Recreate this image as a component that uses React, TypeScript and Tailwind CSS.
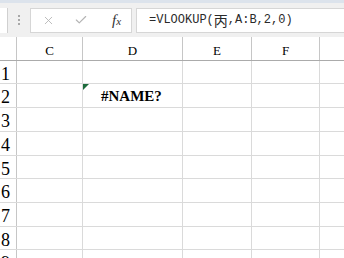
import { X, Check } from 'lucide-react'

const cols = [
  { label: 'C', w: 'w-[66px]' },
  { label: 'D', w: 'w-[100px]' },
  { label: 'E', w: 'w-[69px]' },
  { label: 'F', w: 'w-[68px]' },
]

const rowHeights = ['h-[23px]', 'h-[24px]', 'h-[24px]', 'h-[24px]', 'h-[23px]', 'h-[24px]', 'h-[24px]', 'h-[23px]', 'h-[24px]']

export default function App() {
  return (
    <div className="w-[344px] h-[258px] overflow-hidden bg-white font-['Liberation_Serif',serif] text-black">
      {/* top strip */}
      <div className="h-[3px] bg-[#dce3ec]" />

      {/* formula bar */}
      <div className="h-[34px] bg-[#f0f0f0] flex items-center">
        <div className="w-[8px] h-[25px] bg-white border-r border-[#d0d0d0]" />
        <div className="w-[22px] flex flex-col items-center gap-[2px] pr-[1px]">
          <span className="w-[2px] h-[2px] bg-[#a8a8a8]" />
          <span className="w-[2px] h-[2px] bg-[#a8a8a8]" />
          <span className="w-[2px] h-[2px] bg-[#a8a8a8]" />
        </div>
        <div className="w-[102px] h-[25px] bg-white border border-[#d6d6d6] flex items-center">
          <X className="ml-[11px] w-[13px] h-[13px] text-[#b4b4b4]" strokeWidth={1.6} />
          <Check className="ml-[19px] w-[14px] h-[14px] text-[#b4b4b4]" strokeWidth={2} />
          <span className="ml-[24px] text-[15px] italic text-[#333] leading-none">
            f<span className="text-[11px]">x</span>
          </span>
        </div>
        <div className="ml-[4px] flex-1 h-[25px] bg-white border border-[#d6d6d6] border-r-0 flex items-center pl-[12px] font-['Liberation_Mono','Noto_Sans_CJK_SC',monospace] text-[12px] text-[#2a2a2a]">
          =VLOOKUP(<span className="font-['Noto_Sans_CJK_SC',sans-serif] text-[14px] leading-none">丙</span>,A:B,2,0)
        </div>
      </div>

      {/* column headers */}
      <div className="flex h-[24px] border-b border-[#ababab] bg-white">
        <div className="w-[17px] shrink-0 border-r border-[#c6c6c6]" />
        {cols.map(c => (
          <div key={c.label} className={`${c.w} shrink-0 border-r border-[#c6c6c6] flex items-center justify-center pt-[5px] text-[13px]`}>
            {c.label}
          </div>
        ))}
        <div className="flex-1" />
      </div>

      {/* rows */}
      {rowHeights.map((h, i) => (
        <div key={i} className={`flex ${h} border-b border-[#dadada] shrink-0`}>
          <div className="w-[17px] shrink-0 border-r border-[#c6c6c6] flex items-center pl-[1px] pt-[3px] text-[18px] leading-none">
            {i + 1}
          </div>
          {cols.map(c => (
            <div key={c.label} className={`${c.w} shrink-0 border-r border-[#dadada] relative flex items-center`}>
              {i === 1 && c.label === 'D' && (
                <>
                  <span className="absolute left-0 top-0 w-0 h-0 border-t-[6px] border-t-[#1d6b3c] border-r-[6px] border-r-transparent" />
                  <span className="pl-[18px] pt-[2px] font-bold text-[15px]">#NAME?</span>
                </>
              )}
            </div>
          ))}
          <div className="flex-1" />
        </div>
      ))}
    </div>
  )
}
